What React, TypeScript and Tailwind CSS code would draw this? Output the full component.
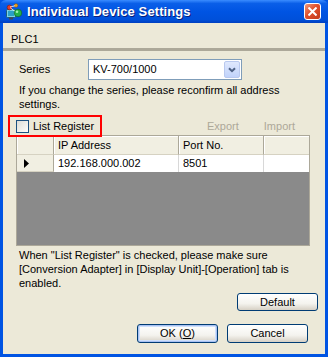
import React from "react";

const font = "font-['Tahoma','Liberation_Sans',Arial,sans-serif]";

const AppIcon = () => (
  <svg width="18" height="18" viewBox="0 0 18 18" className="shrink-0">
    <rect x="1.5" y="6.5" width="9" height="8" rx="1" fill="#7fd3e6" stroke="#1d5c7a" />
    <rect x="3" y="8" width="6" height="5" fill="#2aa0c8" />
    <rect x="4" y="14.5" width="4" height="2" fill="#445" />
    <circle cx="4.5" cy="4.5" r="2.4" fill="#e43b2c" stroke="#7a1c10" strokeWidth="0.6" />
    <circle cx="11" cy="2.5" r="1.8" fill="#f4a21c" stroke="#8a5a0a" strokeWidth="0.6" />
    <path d="M5 4 L10 2.8 M5.5 5 L11 9" stroke="#fff" strokeWidth="0.8" />
    <circle cx="13" cy="10" r="3.8" fill="#22b04a" stroke="#0e5a22" strokeWidth="0.6" />
    <circle cx="12" cy="8.8" r="1.3" fill="#9ff0b0" />
  </svg>
);

const CloseButton = () => (
  <div className="w-[17px] h-[17px] rounded-[3px] border border-white bg-[linear-gradient(135deg,#f09a7a_0%,#e0502d_45%,#c23a1a_100%)] flex items-center justify-center">
    <svg width="9" height="9" viewBox="0 0 9 9">
      <path d="M1.2 1.2 L7.8 7.8 M7.8 1.2 L1.2 7.8" stroke="#fff" strokeWidth="2" strokeLinecap="square" />
    </svg>
  </div>
);

const XpButton = ({ children, isDefault }: { children: React.ReactNode; isDefault?: boolean }) => (
  <button
    className={`w-[81px] rounded-[3px] border border-[#003c74] bg-[linear-gradient(180deg,#ffffff_0%,#f4f3ee_60%,#d6d0c5_100%)] text-[11px] leading-none text-black flex items-center justify-center ${
      isDefault ? "shadow-[inset_0_0_0_1px_#a9c2f3,inset_0_0_0_2px_#cfe0fb]" : ""
    }`}
  >
    {children}
  </button>
);

const HeaderCell = ({ w, children }: { w: string; children?: React.ReactNode }) => (
  <div
    className={`${w} h-full shrink-0 border-r border-[#aca899] border-b border-b-[#d6d2c2] bg-[#f1efe2] flex items-center pl-[4px] shadow-[inset_1px_1px_0_#ffffff]`}
  >
    {children}
  </div>
);

export default function App() {
  return (
    <div className={`${font} w-[328px] h-[357px] bg-[#0054e3] flex flex-col text-[11px] text-black`}>
      {/* title bar */}
      <div className="h-[23px] shrink-0 flex items-center px-[5px] gap-[4px] rounded-t-[6px] bg-[linear-gradient(180deg,#3a8cff_0%,#0a5fe8_15%,#0054e3_50%,#0050da_85%,#003fc0_100%)]">
        <AppIcon />
        <span className="text-white font-bold text-[13px] font-['Liberation_Sans',Arial,sans-serif] tracking-[0.1px] [text-shadow:1px_1px_0_#0a1f7a]">
          Individual Device Settings
        </span>
        <div className="ml-auto mr-[2px]">
          <CloseButton />
        </div>
      </div>

      {/* client area */}
      <div className="flex-1 mx-[3px] mb-[3px] bg-[#ece9d8] flex flex-col">
        <div className="h-[25px] shrink-0 pl-[8px] pt-[9px] leading-[14px]">PLC1</div>
        <div className="h-[3px] shrink-0 bg-[#aca899]" />

        {/* series */}
        <div className="mt-[8px] flex items-center h-[21px] pl-[16px]">
          <span className="w-[69px]">Series</span>
          <div className="w-[154px] h-[21px] border border-[#7f9db9] bg-white flex items-center">
            <span className="pl-[4px] flex-1">KV-700/1000</span>
            <div className="w-[16px] h-[17px] mr-[1px] rounded-[2px] border border-[#b9c9ef] bg-[linear-gradient(180deg,#dfe8fd_0%,#c1d3fb_100%)] flex items-center justify-center">
              <svg width="8" height="6" viewBox="0 0 8 6">
                <path d="M1 1.2 L4 4.2 L7 1.2" fill="none" stroke="#4d6185" strokeWidth="2" />
              </svg>
            </div>
          </div>
        </div>

        <div className="mt-[3px] pl-[16px] pr-[20px] leading-[14px]">
          If you change the series, please reconfirm all address settings.
        </div>

        {/* list register row */}
        <div className="relative mt-[6px] h-[18px] flex items-center">
          <div className="flex items-center pl-[13px] gap-[4px]">
            <div className="w-[13px] h-[13px] border border-[#1c5180] bg-[linear-gradient(135deg,#dcdcd7_0%,#f4f4f0_70%,#ffffff_100%)]" />
            <span>List Register</span>
          </div>
          <span className="ml-auto text-[#aca899]">Export</span>
          <span className="ml-[25px] mr-[30px] text-[#aca899]">Import</span>
          <div className="absolute left-[5px] top-[-2px] w-[94px] h-[22px] border-2 border-[#ff0000]" />
        </div>

        {/* grid */}
        <div className="ml-[13px] mr-[15px] h-[111px] border border-[#aca899] flex flex-col bg-[#8a8a8a]">
          <div className="h-[19px] flex bg-[#f1efe2]">
            <HeaderCell w="w-[37px]" />
            <HeaderCell w="w-[125px]">IP Address</HeaderCell>
            <HeaderCell w="w-[85px]">Port No.</HeaderCell>
            <div className="flex-1 h-full border-b border-[#d6d2c2] shadow-[inset_1px_1px_0_#ffffff]" />
          </div>
          <div className="h-[17px] flex bg-white">
            <div className="w-[37px] shrink-0 bg-[#f1efe2] border-r border-[#aca899] border-b border-b-[#d6d2c2] flex items-center pl-[7px]">
              <svg width="5" height="9" viewBox="0 0 5 9">
                <path d="M0 0 L5 4.5 L0 9 Z" fill="#000" />
              </svg>
            </div>
            <div className="w-[125px] shrink-0 border-r border-[#d8d8d8] flex items-center pl-[4px]">192.168.000.002</div>
            <div className="w-[85px] shrink-0 border-r border-[#d8d8d8] flex items-center pl-[4px]">8501</div>
            <div className="flex-1" />
          </div>
          <div className="flex-1" />
        </div>

        <div className="mt-[2px] pl-[16px] pr-[20px] leading-[14px]">
          When "List Register" is checked, please make sure [Conversion Adapter] in [Display Unit]-[Operation] tab is enabled.
        </div>

        <div className="mt-[3px] flex justify-end pr-[7px]">
          <div className="h-[18px] flex">
            <XpButton>Default</XpButton>
          </div>
        </div>

        <div className="mt-[13px] h-[19px] flex justify-end pr-[17px] gap-[9px]">
          <XpButton isDefault>
            OK (<span className="underline">O</span>)
          </XpButton>
          <XpButton>Cancel</XpButton>
        </div>
      </div>
    </div>
  );
}
